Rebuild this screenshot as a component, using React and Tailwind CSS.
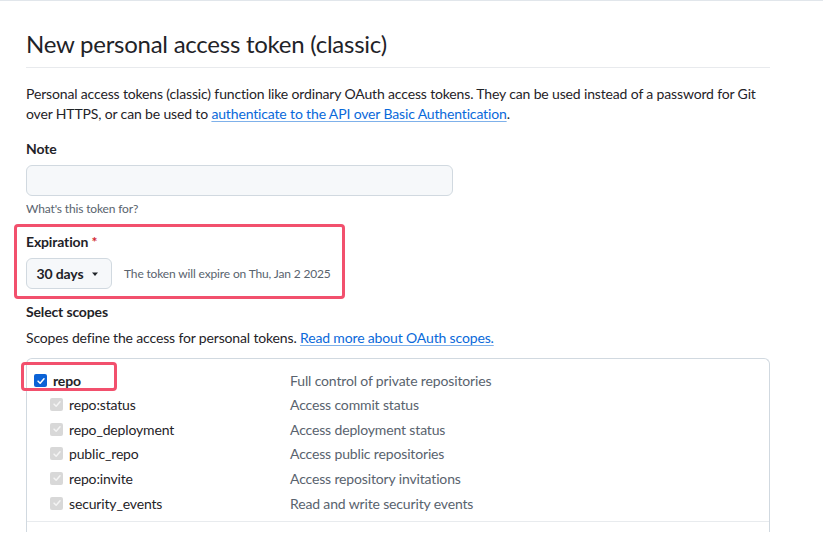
const subScopes = [
  { name: "repo:status", desc: "Access commit status" },
  { name: "repo_deployment", desc: "Access deployment status" },
  { name: "public_repo", desc: "Access public repositories" },
  { name: "repo:invite", desc: "Access repository invitations" },
  { name: "security_events", desc: "Read and write security events" },
];

function Check({ disabled }) {
  return (
    <span
      className={
        disabled
          ? "flex h-[13px] w-[13px] shrink-0 items-center justify-center rounded-[2px] bg-[#d8d8d8]"
          : "flex h-[13px] w-[13px] shrink-0 items-center justify-center rounded-[2px] bg-[#0b62d6]"
      }
    >
      <svg viewBox="0 0 12 12" className="h-[10px] w-[10px]" aria-hidden="true">
        <path d="M2.5 6.2 5 8.6 9.6 3.4" fill="none" stroke={disabled ? "#f4f4f4" : "#ffffff"} strokeWidth="1.8" strokeLinecap="round" strokeLinejoin="round" />
      </svg>
    </span>
  );
}

export default function App() {
  return (
    <div className="min-h-[552px] w-[823px] border-t border-[#e1e6eb] bg-white font-['Lato',sans-serif] tracking-[-0.15px] text-[#1f2328]">
      <div className="w-[770px] pl-[26px] pt-[28px]">
        <h2 className="pb-[8px] text-[24px] leading-[30px] font-normal tracking-[-0.25px] text-[#1f2328]">New personal access token (classic)</h2>
        <div className="h-px bg-[#e8eaed]" />

        <p className="mt-[16px] text-[14px] leading-[20px]">
          Personal access tokens (classic) function like ordinary OAuth access tokens. They can be used instead of a password for Git over HTTPS, or can be used to{" "}
          <a className="text-[#0969da] underline decoration-[#7fb1ea] underline-offset-2">authenticate to the API over Basic Authentication</a>.
        </p>

        <div className="mt-[15px] text-[14px] leading-[20px] font-bold">Note</div>
        <div className="mt-[6px] h-[31px] w-[427px] rounded-[6px] border border-[#d1d9e0] bg-[#f6f8fa]" />
        <div className="mt-[5px] text-[12px] leading-[16px] text-[#59636e]">What's this token for?</div>

        <div className="-ml-[12px] mt-[7px] h-[75px] w-[331px] rounded-[4px] border-[3px] border-[#f2506d] pl-[9px] pt-[5px]">
          <div className="text-[14px] leading-[20px] font-bold">
            Expiration <span className="text-[#d1242f]">*</span>
          </div>
          <div className="mt-[6px] flex items-center gap-[12px]">
            <button type="button" className="flex h-[31px] w-[86px] items-center justify-center gap-[6px] rounded-[6px] border border-[#d1d9e0] bg-[#f6f8fa] text-[14px] font-bold text-[#1f2328]">
              30 days
              <svg viewBox="0 0 16 16" className="h-[12px] w-[12px]" aria-hidden="true">
                <path d="M4 6h8l-4 4.5z" fill="#1f2328" />
              </svg>
            </button>
            <span className="text-[12px] text-[#59636e]">The token will expire on Thu, Jan 2 2025</span>
          </div>
        </div>

        <div className="mt-[3px] text-[14px] leading-[20px] font-bold">Select scopes</div>
        <p className="mt-[6px] text-[14px] leading-[20px]">
          Scopes define the access for personal tokens.{" "}
          <a className="text-[#0969da] underline decoration-[#7fb1ea] underline-offset-2">Read more about OAuth scopes.</a>
        </p>

        <div className="mt-[10px] h-[174px] rounded-t-[6px] border border-b-0 border-[#d1d9e0]">
          <div className="relative flex h-[33px] items-center pt-[10px] text-[14px]">
            <div className="flex w-[263px] items-center gap-[6px] pl-[7px]">
              <Check />
              <span className="font-bold">repo</span>
            </div>
            <span className="text-[#59636e]">Full control of private repositories</span>
            <div className="absolute left-[-6px] top-[3px] h-[29px] w-[96px] rounded-[4px] border-[3px] border-[#f2506d]" />
          </div>
          {subScopes.map((s) => (
            <div key={s.name} className="flex h-[24.7px] items-center text-[14px]">
              <div className="flex w-[263px] items-center gap-[6px] pl-[23px]">
                <Check disabled />
                <span>{s.name}</span>
              </div>
              <span className="text-[#59636e]">{s.desc}</span>
            </div>
          ))}
          <div className="mt-[6px] h-px bg-[#e8ebee]" />
        </div>
      </div>
    </div>
  );
}
